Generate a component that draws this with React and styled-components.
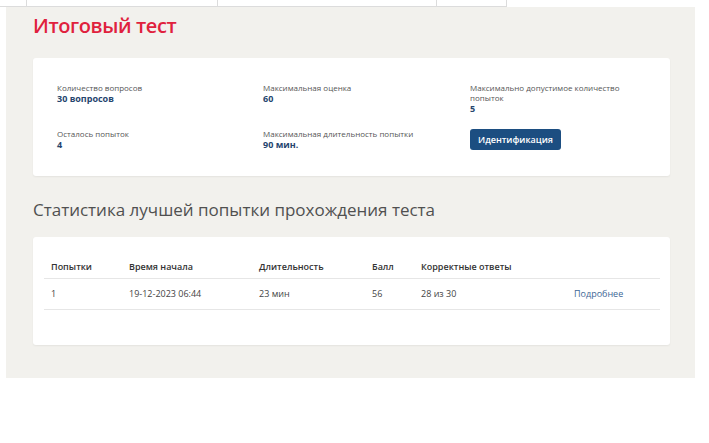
import styled, { createGlobalStyle } from "styled-components"

const Global = createGlobalStyle`
  html, body {
    margin: 0;
    padding: 0;
    background: #ffffff;
    font-family: "Open Sans", "Liberation Sans", sans-serif;
  }
`

const TopStrip = styled.div`
  display: flex;
  width: 507px;
  height: 6px;
  border-bottom: 1px solid #dcdcdc;
`

const TopCell = styled.div`
  width: ${(p) => p.w}px;
  border-right: 1px solid #dcdcdc;
  box-sizing: border-box;
`

const Panel = styled.main`
  margin-left: 6px;
  width: 689px;
  height: 371px;
  box-sizing: border-box;
  background: #f2f1ed;
  padding: 5px 25px 0 27px;
`

const Title = styled.h1`
  margin: 0;
  color: #e0213d;
  font-size: 20px;
  font-weight: 600;
  line-height: 28px;
  letter-spacing: -0.4px;
`

const Card = styled.section`
  background: #ffffff;
  border-radius: 3px;
  box-shadow: 0 1px 2px rgba(0, 0, 0, 0.06);
`

const InfoCard = styled(Card)`
  margin-top: 18px;
  height: 118px;
  box-sizing: border-box;
  padding: 25px 24px 0 24px;
  display: grid;
  grid-template-columns: 206px 207px 1fr;
  row-gap: 15px;
  align-items: start;
  align-content: start;
`

const Info = styled.div`
  display: flex;
  flex-direction: column;
`

const Label = styled.span`
  font-size: 8px;
  line-height: 10px;
  color: #555555;
  max-width: 160px;
`

const Value = styled.span`
  font-size: 9px;
  line-height: 11px;
  font-weight: 700;
  color: #26456e;
`

const Button = styled.button`
  display: block;
  width: 91px;
  height: 21px;
  border: none;
  border-radius: 3px;
  background: #1c4e81;
  color: #ffffff;
  font-family: inherit;
  font-size: 9px;
  font-weight: 600;
  padding: 0;
  cursor: pointer;
`

const Heading = styled.h2`
  margin: 22px 0 0 0;
  font-size: 17px;
  font-weight: 400;
  line-height: 24px;
  color: #505050;
`

const TableCard = styled(Card)`
  margin-top: 15px;
  height: 108px;
  box-sizing: border-box;
  padding: 18px 10px 0 11px;
`

const Table = styled.table`
  width: 100%;
  border-collapse: collapse;
  font-size: 9px;
  color: #444444;
  table-layout: fixed;
`

const Th = styled.th`
  box-sizing: border-box;
  text-align: left;
  font-weight: 600;
  color: #333333;
  height: 23px;
  padding: 0 0 0 7px;
  border-bottom: 1px solid #e6e6e6;
  width: ${(p) => p.w}px;
`

const Td = styled.td`
  height: 30px;
  padding: 0 0 0 7px;
  border-bottom: 1px solid #e6e6e6;
`

const MoreLink = styled.a`
  color: #3d6796;
  text-decoration: none;
`

function App() {
  const info = [
    { label: "Количество вопросов", value: "30 вопросов" },
    { label: "Максимальная оценка", value: "60" },
    { label: "Максимально допустимое количество попыток", value: "5" },
    { label: "Осталось попыток", value: "4" },
    { label: "Максимальная длительность попытки", value: "90 мин." },
  ]
  const cols = [
    { name: "Попытки", w: 78 },
    { name: "Время начала", w: 130 },
    { name: "Длительность", w: 113 },
    { name: "Балл", w: 49 },
    { name: "Корректные ответы", w: 153 },
    { name: "", w: 93 },
  ]

  return (
    <>
      <Global />
      <TopStrip>
        <TopCell w={27} />
        <TopCell w={191} />
        <TopCell w={219} />
        <TopCell w={70} />
      </TopStrip>
      <Panel>
        <Title>Итоговый тест</Title>
        <InfoCard>
          {info.map(({ label, value }) => (
            <Info key={label}>
              <Label>{label}</Label>
              <Value>{value}</Value>
            </Info>
          ))}
          <div>
            <Button>Идентификация</Button>
          </div>
        </InfoCard>
        <Heading>Статистика лучшей попытки прохождения теста</Heading>
        <TableCard>
          <Table>
            <thead>
              <tr>
                {cols.map(({ name, w }, i) => (
                  <Th key={i} w={w}>{name}</Th>
                ))}
              </tr>
            </thead>
            <tbody>
              <tr>
                <Td>1</Td>
                <Td>19-12-2023 06:44</Td>
                <Td>23 мин</Td>
                <Td>56</Td>
                <Td>28 из 30</Td>
                <Td>
                  <MoreLink href="#">Подробнее</MoreLink>
                </Td>
              </tr>
            </tbody>
          </Table>
        </TableCard>
      </Panel>
    </>
  )
}

export default App
